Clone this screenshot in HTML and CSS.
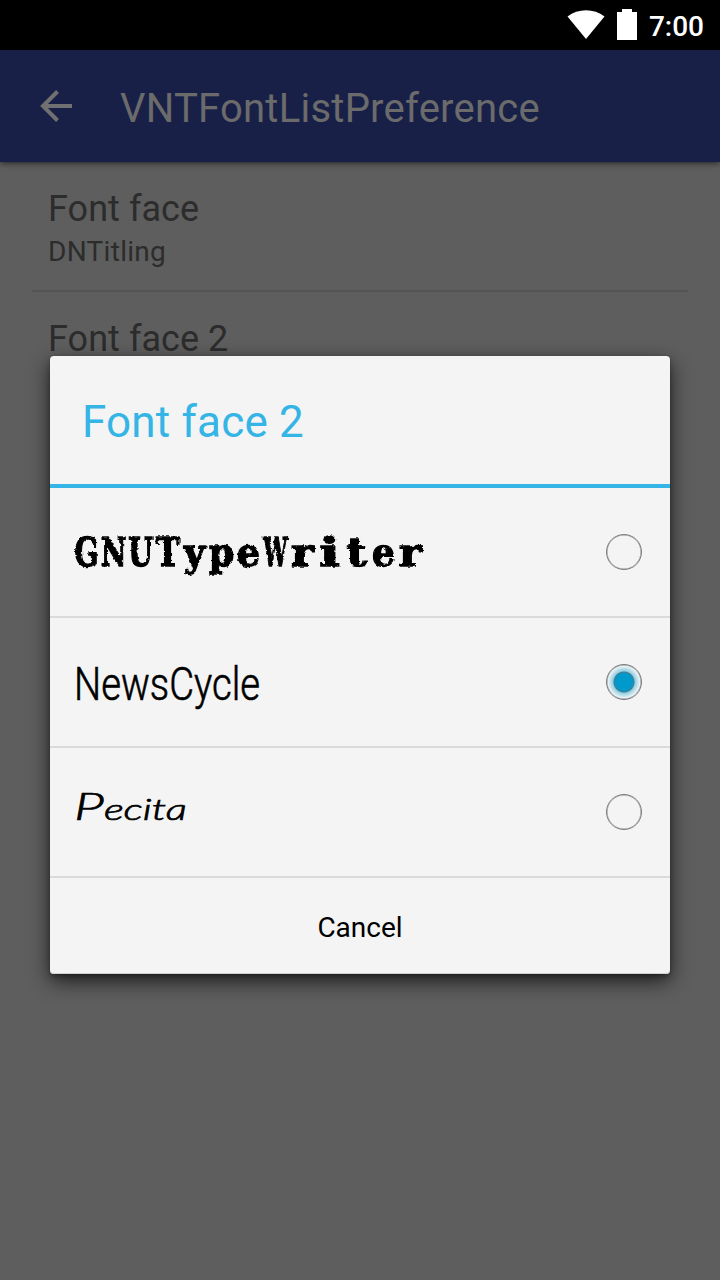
FILE: index.html
```
<!DOCTYPE html>
<html lang="en">
<head>
<meta charset="utf-8">
<title>VNTFontListPreference</title>
<link rel="stylesheet" href="styles.css">
</head>
<body>
<div class="screen">
  <div class="status">
    <svg class="wifi" width="38" height="30" viewBox="0 0 38 30"><path d="M0.5 6.5C11-1.8 27-1.8 37.5 6.5L19 29Z"/></svg>
    <svg class="battery" width="20" height="31" viewBox="0 0 20 31"><path d="M5 0H15V3H20V31H0V3H5Z"/></svg>
    <span class="clock">7:00</span>
  </div>
  <header class="toolbar">
    <svg class="back" width="32" height="32" viewBox="0 0 32 32"><path d="M32 16H3M17.5 1.5L3 16L17.5 30.5"/></svg>
    <h1 class="app-title">VNTFontListPreference</h1>
  </header>
  <main class="prefs">
    <section class="pref">
      <div class="pref-title">Font face</div>
      <div class="pref-value">DNTitling</div>
    </section>
    <section class="pref">
      <div class="pref-title">Font face 2</div>
    </section>
  </main>
  <div class="dialog" role="dialog">
    <h2 class="dialog-title">Font face 2</h2>
    <div class="option">
      <svg class="roughen" width="0" height="0"><filter id="ink" x="-5%" y="-10%" width="110%" height="120%"><feTurbulence type="fractalNoise" baseFrequency="0.3" numOctaves="2" seed="4"/><feDisplacementMap in="SourceGraphic" scale="3" xChannelSelector="R" yChannelSelector="G"/></filter></svg>
      <div class="typewriter"><span class="cap">G</span><span class="cap">N</span><span class="cap">U</span><span class="tee">T</span><span>y</span><span>p</span><span>e</span><span class="double">W</span><span class="thin">r</span><span class="stem">i</span><span class="thin">t</span><span>e</span><span class="thin">r</span></div>
      <span class="radio"></span>
    </div>
    <div class="option">
      <svg class="sample" width="200" height="60"><text class="news" x="-1" y="48" textLength="186" lengthAdjust="spacingAndGlyphs">NewsCycle</text></svg>
      <span class="radio checked"></span>
    </div>
    <div class="option">
      <svg class="sample hand-box" width="140" height="60"><text class="hand" x="-1" y="48" textLength="113" lengthAdjust="spacingAndGlyphs"><tspan class="initial">P</tspan>ecita</text></svg>
      <span class="radio"></span>
    </div>
    <button class="cancel">Cancel</button>
  </div>
</div>
</body>
</html>
```
FILE: styles.css
```
* { box-sizing: border-box; }
body { margin: 0; font-family: Roboto, "Liberation Sans", sans-serif; background: #5e5e5e; }
.screen { position: relative; width: 720px; height: 1280px; overflow: hidden; background: #5e5e5e; }
.status { display: flex; align-items: flex-start; height: 50px; background: #000; padding: 10px 16px 0 0; justify-content: flex-end; color: #fff; }
.status svg { fill: #fff; }
.wifi { margin-right: 12px; }
.battery { margin: -1px 12px 0 0; }
.clock { font-size: 28px; line-height: 33px; font-weight: 500; }
.toolbar { display: flex; align-items: center; height: 112px; background: #192048; padding: 0 40px; gap: 48px; box-shadow: 0 1px 6px rgba(0,0,0,.65); }
.back { fill: none; stroke: #707070; stroke-width: 4; }
.app-title { margin: 5px 0 0; font-size: 40px; line-height: 48px; font-weight: 400; letter-spacing: .24px; color: #6b6b6b; }
.prefs { padding: 0 32px; }
.pref { height: 130px; padding: 25px 16px 0; border-bottom: 2px solid #545454; color: #2c2c2c; }
.pref:last-child { border-bottom: 0; }
.pref-title { font-size: 36px; line-height: 44px; letter-spacing: .05px; }
.pref-value { font-size: 28px; line-height: 34px; margin-top: 4px; letter-spacing: .3px; }
.dialog { position: absolute; left: 50px; top: 356px; width: 620px; height: 618px; background: #f4f4f4; border-radius: 4px; box-shadow: 0 7px 20px rgba(0,0,0,.7), 0 2px 4px rgba(0,0,0,.3), inset 0 -1px #d0d0d0; }
.dialog-title { margin: 0; height: 132px; padding: 40px 32px 0; border-bottom: 4px solid #35b5e5; color: #35b5e5; font-size: 44px; line-height: 52px; font-weight: 400; letter-spacing: .2px; }
.option { display: flex; align-items: center; justify-content: space-between; height: 130px; padding: 0 28px 0 25px; border-bottom: 2px solid #dadada; }
.roughen { display: none; }
.typewriter { display: grid; grid-template-columns: repeat(13, 27px); margin-left: -2px; font: bold 40px/50px "DejaVu Serif Condensed", "DejaVu Serif", serif; color: #000; -webkit-text-stroke: 1.3px #000; filter: url(#ink); }
.typewriter span { display: flex; justify-content: center; }
.typewriter .cap { transform: scaleX(.78); }
.typewriter .tee { transform: scaleX(.88); }
.typewriter .double { transform: scaleX(.6); }
.typewriter .thin { transform: scaleX(1.2); }
.typewriter .stem { transform: scaleX(1.5); }
.sample { overflow: visible; }
.news { font-size: 46px; font-weight: 300; stroke: #000; stroke-width: .6px; }
.hand { font: italic 300 29px Lato, sans-serif; stroke: #000; stroke-width: .7px; }
.initial { font-size: 38px; }
.hand-box { margin-top: -20px; }
.radio { flex: none; width: 36px; height: 36px; border: 1.5px solid #7b7b7b; border-radius: 50%; box-shadow: inset 0 0 0 .5px #999; }
.checked { background: radial-gradient(circle, #0099cc 0 9px, #55777f 10px, #8fcee4 11px, #eef4f6 16px); }
.cancel { display: block; width: 100%; height: 96px; padding: 3px 0 0; border: 0; background: none; font: 28px Roboto, sans-serif; color: #000; }
```
